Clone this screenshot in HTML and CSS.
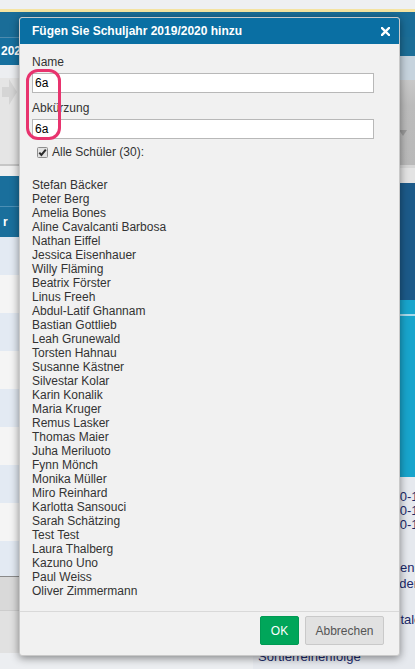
FILE: index.html
```html
<html>
  <head>
    <title>Klassen</title>
    <link rel="stylesheet" href="styles.css">
  </head>
  <body>
    <div id="page">
      <div class="topStrip"></div>
      <div class="notice"></div>
      <div class="navbar"></div>

      <div id="main">
        <div id="leftColumn">
          <div class="yearTabs"><span>2020/2021</span></div>
          <div class="toolbar">
            <svg class="toolbarArrow" width="16" height="28" viewBox="0 0 16 28">
              <polygon points="1,9 8,9 8,1 16,14 8,27 8,19 1,19" fill="#d5d5d5"/>
            </svg>
          </div>
          <div class="toolbarGap"></div>
          <div class="subnav"></div>
          <div class="tableHead">r</div>
          <div class="tableRow odd"></div>
          <div class="tableRow"></div>
          <div class="tableRow odd"></div>
          <div class="tableRow"></div>
          <div class="tableRow odd"></div>
          <div class="tableRow"></div>
          <div class="tableRow odd"></div>
          <div class="tableRow"></div>
          <div class="tableRow odd short"></div>
          <div class="tableFoot"></div>
          <div class="pager"></div>
        </div>

        <div id="rightColumn">
          <div class="panelHead"></div>
          <div class="panelTabs"></div>
          <div class="panelTools"><span class="caret"></span></div>
          <div class="panelLine"></div>
          <div class="panelGap"></div>
          <div class="cardDark"></div>
          <div class="cardCyan"></div>
          <div class="cardCyan tall"></div>
          <div class="infoBox">
            <div class="infoRow"><span class="infoLabel">Beginn</span>2020-10-12</div>
            <div class="infoRow"><span class="infoLabel">Ende</span>2020-10-16</div>
            <div class="infoRow"><span class="infoLabel">Zeugnis</span>2020-10-19</div>
            <div class="infoLinks">
              <p>Stundenplan</p>
              <p>Kalender</p>
            </div>
            <p class="infoMore">Digitale Tafel</p>
            <p class="infoSort">Sortierreihenfolge</p>
          </div>
        </div>
      </div>

      <!-- dialog -->
      <div id="dialog">
        <div class="dialogHeader">
          <span>Fügen Sie Schuljahr 2019/2020 hinzu</span>
          <svg class="closeIcon" width="9" height="9" viewBox="0 0 9 9">
            <path d="M1 1 L8 8 M8 1 L1 8" stroke="#fff" stroke-width="2.4" stroke-linecap="square"/>
          </svg>
        </div>
        <div class="dialogBody">
          <label class="fieldLabel">Name</label>
          <input class="textField" type="text" value="6a">
          <label class="fieldLabel second">Abkürzung</label>
          <input class="textField" type="text" value="6a">
          <div class="checkRow">
            <svg class="checkBox" width="11" height="11" viewBox="0 0 11 11">
              <rect x="0.5" y="0.5" width="10" height="10" rx="1" fill="#e2e2e2" stroke="#8e8e8e"/>
              <path d="M2.3 5.6 L4.4 7.9 L8.8 2.6" fill="none" stroke="#2b2b2b" stroke-width="2"/>
            </svg>
            <span>Alle Schüler (30):</span>
          </div>
          <ul class="studentList">
            <li>Stefan Bäcker</li>
            <li>Peter Berg</li>
            <li>Amelia Bones</li>
            <li>Aline Cavalcanti Barbosa</li>
            <li>Nathan Eiffel</li>
            <li>Jessica Eisenhauer</li>
            <li>Willy Fläming</li>
            <li>Beatrix Förster</li>
            <li>Linus Freeh</li>
            <li>Abdul-Latif Ghannam</li>
            <li>Bastian Gottlieb</li>
            <li>Leah Grunewald</li>
            <li>Torsten Hahnau</li>
            <li>Susanne Kästner</li>
            <li>Silvestar Kolar</li>
            <li>Karin Konalik</li>
            <li>Maria Kruger</li>
            <li>Remus Lasker</li>
            <li>Thomas Maier</li>
            <li>Juha Meriluoto</li>
            <li>Fynn Mönch</li>
            <li>Monika Müller</li>
            <li>Miro Reinhard</li>
            <li>Karlotta Sansouci</li>
            <li>Sarah Schätzing</li>
            <li>Test Test</li>
            <li>Laura Thalberg</li>
            <li>Kazuno Uno</li>
            <li>Paul Weiss</li>
            <li>Oliver Zimmermann</li>
          </ul>
        </div>
        <div class="dialogFooter">
          <button class="okButton">OK</button>
          <button class="cancelButton">Abbrechen</button>
        </div>
      </div>

      <!-- highlight marker over the two fields -->
      <div class="marker"></div>
    </div>
  </body>
</html>
```

FILE: styles.css
```css
body {
  margin: 0;
  font-family: "Liberation Sans", Arial, sans-serif;
  font-size: 12px;
}

#page {
  position: relative;
  width: 415px;
  height: 669px;
  overflow: hidden;
  background-color: #eceef1;
}

.topStrip {
  height: 9px;
  background-color: #eef0f2;
}

.notice {
  height: 3px;
  background-color: #f5e4a2;
}

.navbar {
  height: 25px;
  background-color: #1a6d98;
}

#main {
  display: grid;
  grid-template-columns: 253px 162px;
}

/* page behind the dialog, left side */
.yearTabs {
  height: 27px;
  border-top: 1px solid #4d8bae;
  background-color: #16709f;
  color: white;
  font-weight: bold;
  line-height: 27px;
  padding-left: 1px;
}

.toolbar {
  height: 86px;
  background-color: #e5e5e5;
  border-bottom: 2px solid #c6c6c6;
}

.toolbarArrow {
  display: block;
  margin: 13px 0 0 1px;
}

.toolbarGap {
  height: 10px;
  background-color: #efefef;
}

.subnav {
  height: 30px;
  background-color: #1a6f9c;
  border-bottom: 1px solid #4c8fb5;
}

.tableHead {
  height: 30px;
  line-height: 30px;
  padding-left: 3px;
  background-color: #1a6f9c;
  color: white;
  font-weight: bold;
}

.tableRow {
  height: 38px;
  background-color: #f5f5f5;
}

.tableRow.odd {
  background-color: #e3eaf3;
}

.tableRow.short {
  height: 35px;
}

.tableFoot {
  height: 33px;
  border-top: 1px solid #8a8a8a;
  border-bottom: 1px solid #cdcdcd;
  background-color: #d9d9d9;
}

.pager {
  height: 42px;
  background-color: #e1e1e1;
}

/* page behind the dialog, right side */
#rightColumn {
  min-width: 0;
}

.panelHead {
  height: 19px;
  background-color: #1c6e97;
}

.panelTabs {
  height: 24px;
  background-color: #c6d3dd;
}

.panelTools {
  height: 85px;
  background: linear-gradient(#c9c9c9, #bcbcbc 30%, #b9b9b9);
  position: relative;
}

.caret {
  position: absolute;
  left: 146px;
  top: 50px;
  border-left: 4px solid transparent;
  border-right: 4px solid transparent;
  border-top: 6px solid #9a9a9a;
}

.panelLine {
  height: 3px;
  background-color: #d5d5d5;
}

.panelGap {
  height: 15px;
  background-color: #e3e3e3;
}

.cardDark {
  height: 117px;
  background-color: #1c5a89;
}

.cardCyan {
  height: 14px;
  background-color: #18a5cc;
  border-bottom: 2px solid #a9d9ea;
}

.cardCyan.tall {
  height: 161px;
  border-bottom: none;
}

.infoBox {
  background-color: #e6e9ee;
  padding: 13px 0 0 5px;
  height: 180px;
  color: #1b2a6b;
  font-size: 13px;
  white-space: nowrap;
}

.infoRow {
  display: flex;
  line-height: 14px;
}

.infoLabel {
  width: 120px;
  flex-shrink: 0;
}

.infoLinks {
  margin-top: 28px;
  padding-left: 108px;
}

.infoLinks p,
.infoMore,
.infoSort {
  margin: 0;
  line-height: 16px;
}

.infoMore {
  margin-top: 20px;
  padding-left: 120px;
}

.infoSort {
  margin-top: 21px;
}

/* dialog */
#dialog {
  position: absolute;
  left: 19px;
  top: 17px;
  width: 381px;
  box-sizing: border-box;
  border: 1px solid #c9c9c9;
  border-radius: 3px;
  background-color: #f1f1f1;
  box-shadow: 0 2px 9px rgba(0, 0, 0, 0.45);
}

.dialogHeader {
  height: 26px;
  display: flex;
  align-items: center;
  justify-content: space-between;
  padding: 0 9px 0 12px;
  background-color: #0a6fa3;
  color: white;
  font-weight: bold;
  border-radius: 2px 2px 0 0;
}

.closeIcon {
  display: block;
}

.dialogBody {
  padding: 11px 12px 13px 12px;
}

.fieldLabel {
  display: block;
  line-height: 14px;
  color: #333;
}

.fieldLabel.second {
  margin-top: 8px;
}

.textField {
  display: block;
  box-sizing: border-box;
  width: 342px;
  height: 20px;
  margin: 4px 0 0 0;
  padding: 0 2px;
  border: 1px solid #b8b8b8;
  background-color: white;
  font-family: "Liberation Sans", Arial, sans-serif;
  font-size: 12px;
  color: black;
}

.checkRow {
  display: flex;
  align-items: center;
  margin-top: 6px;
  padding-left: 5px;
  height: 14px;
  color: #333;
}

.checkBox {
  margin-right: 4px;
}

.studentList {
  list-style: none;
  margin: 19px 0 0 0;
  padding: 0;
  line-height: 14px;
  color: #333;
}

.dialogFooter {
  display: flex;
  justify-content: flex-end;
  gap: 6px;
  padding: 4px 15px 10px 0;
  border-top: 1px solid #d9d9d9;
}

.okButton,
.cancelButton {
  height: 29px;
  border-radius: 2px;
  font-family: "Liberation Sans", Arial, sans-serif;
  font-size: 12px;
  padding: 0;
}

.okButton {
  width: 39px;
  background-color: #00a65a;
  border: 1px solid #009a53;
  color: white;
}

.cancelButton {
  width: 79px;
  background-color: #e1e1e1;
  border: 1px solid #c9c9c9;
  color: #555;
}

.marker {
  position: absolute;
  left: 26px;
  top: 69px;
  width: 35px;
  height: 71px;
  box-sizing: border-box;
  border: 3px solid #e8336e;
  border-radius: 12px;
}
```
